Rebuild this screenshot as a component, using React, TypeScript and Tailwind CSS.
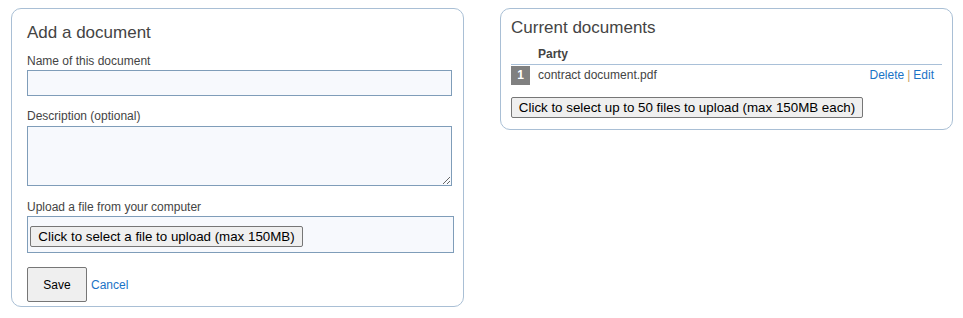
export default function App() {
  return (
    <div className="flex items-start gap-[36px] pl-[11px] pt-[8px] font-['Liberation_Sans',Arial,sans-serif] text-[#333]">
      {/* Add a document */}
      <div className="w-[453px] rounded-[10px] border border-[#a9bfd5] pl-[15px] pr-[10px] pt-[14px] pb-[4px]">
        <h2 className="text-[17px] leading-[20px] text-[#444]">Add a document</h2>

        <label className="mt-[10px] block text-[12px] leading-[16px] text-[#444]">Name of this document</label>
        <input
          type="text"
          className="mt-[1px] block h-[26px] w-[425px] border border-[#7f9db9] bg-[#f7f9fd] px-1 text-[13px] outline-none"
        />

        <label className="mt-[12px] block text-[12px] leading-[16px] text-[#444]">Description (optional)</label>
        <textarea className="mt-[2px] block h-[60px] w-[425px] resize border border-[#7f9db9] bg-[#f7f9fd] px-1 text-[13px] outline-none" />

        <label className="mt-[13px] block text-[12px] leading-[16px] text-[#444]">Upload a file from your computer</label>
        <div className="mt-[1px] h-[37px] w-[427px] border border-[#7f9db9] bg-[#f7f9fd] pl-[2px] pt-[7px]">
          <button className="h-[21px] w-[273px] rounded-[2px] border border-[#767676] bg-[#efefef] text-[13.33px] leading-[19px] text-black">
            Click to select a file to upload (max 150MB)
          </button>
        </div>

        <div className="mt-[14px] flex items-center gap-[4px]">
          <button className="h-[35px] w-[60px] rounded-[2px] border border-[#767676] bg-[#efefef] text-[12px] text-black">
            Save
          </button>
          <a href="#" className="text-[12px] leading-[16px] text-[#1a73c6]">Cancel</a>
        </div>
      </div>

      {/* Current documents */}
      <div className="w-[453px] rounded-[10px] border border-[#a9bfd5] px-[10px] pt-[9px] pb-[10px]">
        <h2 className="text-[17px] leading-[20px] text-[#444]">Current documents</h2>

        <div className="mt-[8px] border-b border-[#a9c0d8] pb-[2px] pl-[27px] text-[12px] font-bold leading-[16px] text-[#444]">
          Party
        </div>
        <div className="mt-[1px] flex items-center text-[12px] leading-[19px]">
          <span className="h-[19px] w-[19px] bg-[#808080] text-center font-bold text-white">1</span>
          <span className="ml-[8px] flex-1 text-[#444]">contract document.pdf</span>
          <span className="pr-[8px]">
            <a href="#" className="text-[#1a73c6]">Delete</a>
            <span className="px-[3px] text-[#c8a060]">|</span>
            <a href="#" className="text-[#1a73c6]">Edit</a>
          </span>
        </div>

        <button className="mt-[12px] h-[21px] w-[352px] rounded-[2px] border border-[#767676] bg-[#efefef] text-[13.33px] leading-[19px] text-black">
          Click to select up to 50 files to upload (max 150MB each)
        </button>
      </div>
    </div>
  )
}
